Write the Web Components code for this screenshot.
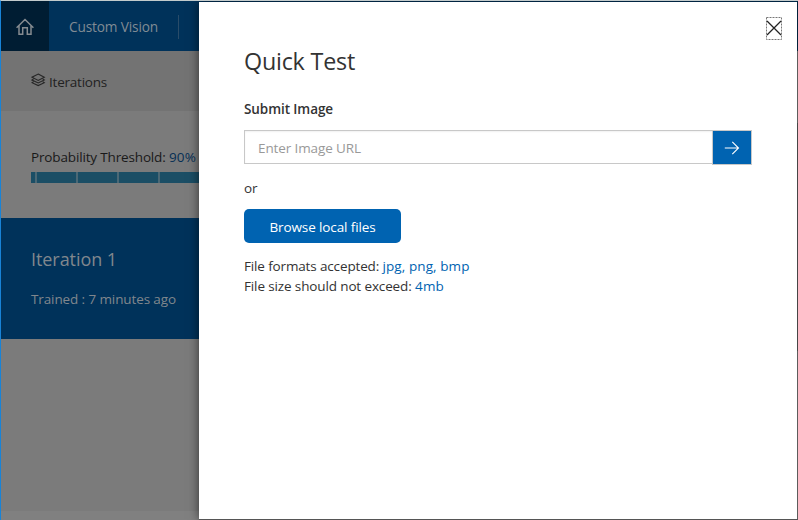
<!DOCTYPE html>
<html lang="en">
<head>
<meta charset="utf-8">
<title>Custom Vision</title>
<style>
html, body { margin: 0; height: 100%; overflow: hidden; }
body { font-family: "Open Sans", "Noto Sans", sans-serif; font-size: 13.5px; color: #333; }
</style>
</head>
<body>
<vision-app></vision-app>
<script>
const define = (name, html, connected) => {
  const t = document.createElement('template');
  t.innerHTML = html;
  customElements.define(name, class extends HTMLElement {
    constructor() {
      super();
      this.attachShadow({ mode: 'open' }).append(t.content.cloneNode(true));
    }
    connectedCallback() { if (connected) connected.call(this); }
  });
};

/* One line of text, tracked so that it fills the width given in "fit". */
define('text-line', `<style>
:host { display: block; white-space: nowrap; line-height: 20px; }
span { display: inline-block; }
</style><span><slot></slot></span>`, function () {
  const s = this.shadowRoot.querySelector('span');
  const fit = +this.getAttribute('fit');
  if (fit) s.style.letterSpacing =
    (fit - s.getBoundingClientRect().width) / this.textContent.length + 'px';
});

define('app-header', `<style>
:host { display: flex; height: 50px; background: #00325a; color: #808b94; align-items: center; }
.home { box-sizing: border-box; width: 48px; height: 50px; padding-top: 1px; background: #001d33; display: flex; align-items: center; justify-content: center; }
.name { margin: 2px 20px 0 20px; font-size: 13.7px; }
.rule { width: 1px; height: 24px; background: #294c69; margin-top: 2px; }
</style>
<div class="home"><svg width="20" height="20" viewBox="0 0 20 20" fill="none" stroke="#858b90" stroke-width="1.5"><path d="M1.6 10.7 10 2.5l8.4 8.2M4 8.7v8.5h3.7v-6.4h4.6v6.4H16V8.7"/></svg></div>
<text-line class="name" fit="89">Custom Vision</text-line><div class="rule"></div>`);

define('iterations-bar', `<style>
:host { display: flex; box-sizing: border-box; height: 60px; padding: 1px 0 0 30px; gap: 3px; background: #737373; color: #222; align-items: center; }
svg { margin-top: -3px; }
</style>
<svg width="15" height="14" viewBox="0 0 15 14" fill="none" stroke="#262626" stroke-width="1.1"><path d="M7.2 1 13.3 4.2 7.2 7.4 1 4.2zM2.6 5.9 1 7l6.2 3L13.3 7l-1.6-1.1M2.6 8.6 1 9.7l6.2 2.9 6.1-2.9-1.6-1.1"/></svg>
<text-line fit="58">Iterations</text-line>`);

define('threshold-meter', `<style>
:host { display: block; box-sizing: border-box; height: 107px; padding: 36px 0 0 30px; background: #7b7b7b; color: #191919; }
.row { display: flex; }
.val { color: #062f55; }
.bar { display: flex; gap: 2px; margin-top: 5px; height: 11px; background: #4b6875; overflow: hidden; }
i { flex: 0 0 39px; background: #1b4e65; }
i:first-child { flex-basis: 4px; }
</style>
<div class="row"><text-line fit="138">Probability Threshold:&nbsp;</text-line><text-line class="val" fit="27">90%</text-line></div>
<div class="bar"><i></i><i></i><i></i><i></i><i></i></div>`);

define('iteration-card', `<style>
:host { display: block; box-sizing: border-box; height: 121px; padding: 31px 0 0 30px; background: #00325a; color: #80878d; }
.title { font-size: 18px; }
.when { margin-top: 20px; }
</style>
<text-line class="title" fit="86">Iteration 1</text-line>
<text-line class="when" fit="145">Trained : 7 minutes ago</text-line>`);

define('url-field', `<style>
:host { display: flex; width: 508px; height: 34px; }
.in { flex: 1; display: flex; box-sizing: border-box; border: 1px solid #c8c8c8; border-right: 0; padding: 2px 0 0 13px; align-items: center; color: #999; box-shadow: inset 0 1px 2px #0000000f; }
button { box-sizing: border-box; width: 40px; height: 35px; padding: 0; border: 1px solid #c8c8c8; background: #0063b1; display: flex; align-items: center; justify-content: center; }
</style>
<div class="in"><text-line fit="103">Enter Image URL</text-line></div>
<button aria-label="Submit"><svg width="16" height="14" viewBox="0 0 16 14" fill="none" stroke="#fff" stroke-width="1.1"><path d="M.8 7h13.6M8.3.8 14.5 7l-6.2 6.2"/></svg></button>`);

define('browse-button', `<style>
:host { display: flex; box-sizing: border-box; width: 157px; height: 34px; padding-top: 1px; border-radius: 5px; background: #0063b1; color: #fff; align-items: center; justify-content: center; }
</style><text-line fit="106">Browse local files</text-line>`);

define('close-button', `<style>
:host { display: block; width: 16px; height: 23px; }
svg { display: block; }
</style><svg width="16" height="23" fill="none"><path d="M.5 .5h15v22H.5z" stroke="#777" stroke-dasharray="2 1"/><path d="M1 4l14 14M15 4 1 18" stroke="#222" stroke-width="1.3"/></svg>`);

define('quick-test', `<style>
:host { display: block; box-sizing: border-box; background: #fff; padding: 44px 0 0 45px; }
close-button { position: absolute; right: 15px; top: 15px; }
.h { font-size: 23.3px; line-height: 30px; }
.sub { font-weight: 600; margin: 23px 0 11px; }
.or { margin: 14px 0 11px; }
.row { display: flex; }
.fmt { margin-top: 13px; }
.val { color: #0063b1; }
</style>
<close-button></close-button>
<text-line class="h" fit="111">Quick Test</text-line>
<text-line class="sub" fit="89">Submit Image</text-line>
<url-field></url-field>
<text-line class="or" fit="13.5">or</text-line>
<browse-button></browse-button>
<div class="row fmt"><text-line fit="138.5">File formats accepted:&nbsp;</text-line><text-line class="val" fit="87">jpg, png, bmp</text-line></div>
<div class="row"><text-line fit="171">File size should not exceed:&nbsp;</text-line><text-line class="val" fit="29">4mb</text-line></div>`);

define('vision-app', `<style>
:host { display: block; position: relative; box-sizing: border-box; width: 798px; height: 520px; border-left: 1px solid #1883d7; border-top: 1px solid #c3cbcc; background: #7b7b7b; overflow: hidden; }
.page { display: flex; flex-direction: column; height: 519px; }
.rest { flex: 1; }
.foot { height: 9px; background: #808080; }
quick-test { position: absolute; left: 198px; top: 1px; width: 598px; height: 517px; box-shadow: 0 0 10px #0009; }
.edge { position: absolute; right: 0; top: 0; width: 1px; height: 519px; background: linear-gradient(#00203a 50px, #5c5c5c 50px 122px, #464646 122px 350px, #5c5c5c 350px); }
.base { position: absolute; left: 198px; right: 0; bottom: 0; height: 1px; background: #555; }
</style>
<div class="page">
<app-header></app-header><iterations-bar></iterations-bar><threshold-meter></threshold-meter><iteration-card></iteration-card>
<div class="rest"></div><div class="foot"></div>
</div>
<quick-test></quick-test><div class="edge"></div><div class="base"></div>`);
</script>
</body>
</html>
